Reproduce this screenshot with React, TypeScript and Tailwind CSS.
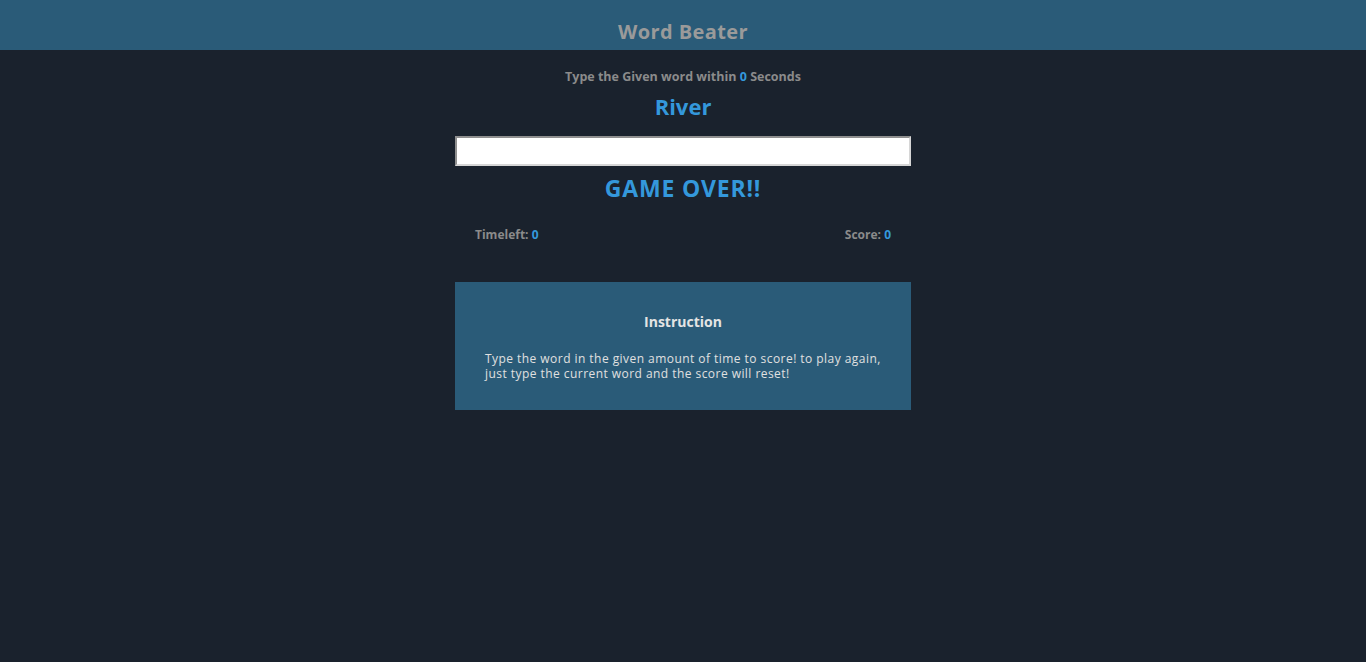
import React, { useState } from 'react';

const font = { fontFamily: '"Open Sans", "Liberation Sans", sans-serif' };

export default function App() {
  const [value, setValue] = useState('');
  const seconds = 0;
  const timeLeft = 0;
  const score = 0;

  return (
    <div className="min-h-[662px] bg-[#1a222d]" style={font}>
      <header className="h-[50px] bg-[#2a5b78] flex items-end justify-center pb-[3px]">
        <h1 className="text-[20px] font-bold text-[#9a9a9a] tracking-[0.4px]">Word Beater</h1>
      </header>

      <main className="w-[456px] mx-auto flex flex-col items-center">
        <p className="mt-[18px] text-[12.5px] font-bold text-[#8b8b8b] leading-[18px]">
          Type the Given word within <span className="text-[#3498db]">{seconds}</span> Seconds
        </p>
        <h2 className="mt-[5px] text-[22px] font-bold text-[#3498db] leading-[30px]">River</h2>

        <input
          value={value}
          onChange={(e) => setValue(e.target.value)}
          className="mt-[15px] w-full h-[30px] bg-white border-2 border-t-[#8f8f8f] border-l-[#8f8f8f] border-r-[#d6d6d6] border-b-[#d6d6d6] outline-none px-2"
        />

        <h3 className="mt-[7px] text-[23px] font-bold text-[#3498db] leading-[30px] tracking-[0.8px]">GAME OVER!!</h3>

        <div className="w-full flex justify-between px-5 mt-[24px] text-[12px] font-bold text-[#8b8b8b] leading-[16px]">
          <span>Timeleft: <span className="text-[#3498db]">{timeLeft}</span></span>
          <span>Score: <span className="text-[#3498db]">{score}</span></span>
        </div>

        <section className="w-full mt-[39px] bg-[#2a5b78] h-[128px] px-[30px] pt-[30px]">
          <h4 className="text-center text-[14px] font-bold text-[#e4e4e4] leading-[20px]">Instruction</h4>
          <p className="mt-[19px] text-[12px] tracking-[0.45px] text-[#e0e0e0] leading-[15px]">
            Type the word in the given amount of time to score! to play again, just type the current word and the score will reset!
          </p>
        </section>
      </main>
    </div>
  );
}
